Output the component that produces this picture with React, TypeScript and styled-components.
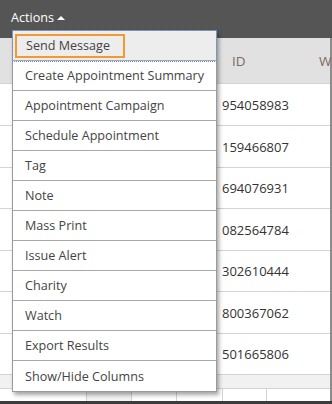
import styled, { createGlobalStyle } from "styled-components";

const GlobalStyle = createGlobalStyle`
  body {
    margin: 0;
    font-family: "Open Sans", "Liberation Sans", sans-serif;
    background: #fff;
  }
`;

const Frame = styled.div`
  position: relative;
  width: 332px;
  height: 404px;
  overflow: hidden;
  box-sizing: border-box;
  border-bottom: 3px solid #3c3c3c;
  display: flex;
  flex-direction: column;
`;

const TopBar = styled.div`
  height: 38px;
  flex: none;
  background: #555555;
  display: flex;
  align-items: center;
  padding: 0 0 3px 11px;
  box-sizing: border-box;
`;

const ActionsLabel = styled.span`
  color: #fff;
  font-size: 12.6px;
  display: flex;
  align-items: center;
  gap: 3px;
`;

const Caret = styled.span`
  width: 0;
  height: 0;
  border-left: 4px solid transparent;
  border-right: 4px solid transparent;
  border-bottom: 4px solid #fff;
  margin-top: 1px;
`;

const Table = styled.div`
  flex: 1;
  display: flex;
  flex-direction: column;
  border-right: 2px solid #8c8c8c;
`;

const Row = styled.div<{ $height: number; $bg?: string }>`
  display: grid;
  grid-template-columns: 217px 95px 1fr;
  height: ${(p) => p.$height}px;
  flex: none;
  box-sizing: border-box;
  background: ${(p) => p.$bg || "#fff"};
  border-bottom: 1px solid #d4d4d4;
  font-size: 13px;
  color: #333;
`;

const HeadCell = styled.div<{ $pad: number }>`
  display: flex;
  align-items: center;
  padding-left: ${(p) => p.$pad}px;
  color: #7d6a60;
  font-size: 13.5px;
`;

const Cell = styled.div`
  display: flex;
  align-items: center;
  padding-left: 5px;
`;

const Band = styled.div`
  height: 13px;
  flex: none;
  background: #f1f1f1;
  border-bottom: 1px solid #d4d4d4;
`;

const FootRow = styled.div`
  flex: 1;
  display: grid;
  grid-template-columns: 87px 45px 45px 46px 44px 1fr;
`;

const FootCell = styled.div<{ $shaded?: boolean }>`
  border-right: 1px solid #d4d4d4;
  background: ${(p) => (p.$shaded ? "#f3f3f3" : "#fff")};
  &:last-child {
    border-right: none;
  }
`;

const Menu = styled.ul`
  position: absolute;
  left: 12px;
  top: 30px;
  width: 205px;
  margin: 0;
  padding: 0;
  list-style: none;
  background: #fff;
  border: 1px solid #9a9a9a;
  box-sizing: border-box;
  box-shadow: 2px 3px 4px rgba(0, 0, 0, 0.35);
`;

const MenuItem = styled.li<{ $active?: boolean }>`
  height: 30px;
  box-sizing: border-box;
  display: flex;
  align-items: center;
  padding-left: ${(p) => (p.$active ? 2 : 12)}px;
  font-size: 12.6px;
  color: #444;
  border-bottom: 1px solid #a8a8a8;
  background: ${(p) => (p.$active ? "#ededed" : "#fff")};
  outline: ${(p) => (p.$active ? "1px dotted #5d8fd4" : "none")};
  &:last-child {
    border-bottom: none;
  }
`;

const FocusBox = styled.span`
  display: flex;
  align-items: center;
  width: 110px;
  height: 24px;
  box-sizing: border-box;
  padding-left: 9px;
  border: 2px solid #f29a2e;
`;

const ids = [
  "954058983",
  "159466807",
  "694076931",
  "082564784",
  "302610444",
  "800367062",
  "501665806",
];

const rowHeights = [42, 42, 41, 42, 41, 42, 41];

const actions = [
  "Send Message",
  "Create Appointment Summary",
  "Appointment Campaign",
  "Schedule Appointment",
  "Tag",
  "Note",
  "Mass Print",
  "Issue Alert",
  "Charity",
  "Watch",
  "Export Results",
  "Show/Hide Columns",
];

export default function App() {
  return (
    <>
      <GlobalStyle />
      <Frame>
        <TopBar>
          <ActionsLabel>
            Actions
            <Caret />
          </ActionsLabel>
        </TopBar>
        <Table>
          <Row $height={46} $bg="#e1e1e1">
            <div />
            <HeadCell $pad={15}>ID</HeadCell>
            <HeadCell $pad={7}>W</HeadCell>
          </Row>
          {ids.map((id, i) => (
            <Row key={id} $height={rowHeights[i]}>
              <div />
              <Cell>{id}</Cell>
              <div />
            </Row>
          ))}
          <Band />
          <FootRow>
            <FootCell />
            <FootCell $shaded />
            <FootCell />
            <FootCell />
            <FootCell />
            <FootCell />
          </FootRow>
        </Table>
        <Menu>
          {actions.map((a, i) =>
            i === 0 ? (
              <MenuItem key={a} $active>
                <FocusBox>{a}</FocusBox>
              </MenuItem>
            ) : (
              <MenuItem key={a}>{a}</MenuItem>
            )
          )}
        </Menu>
      </Frame>
    </>
  );
}
